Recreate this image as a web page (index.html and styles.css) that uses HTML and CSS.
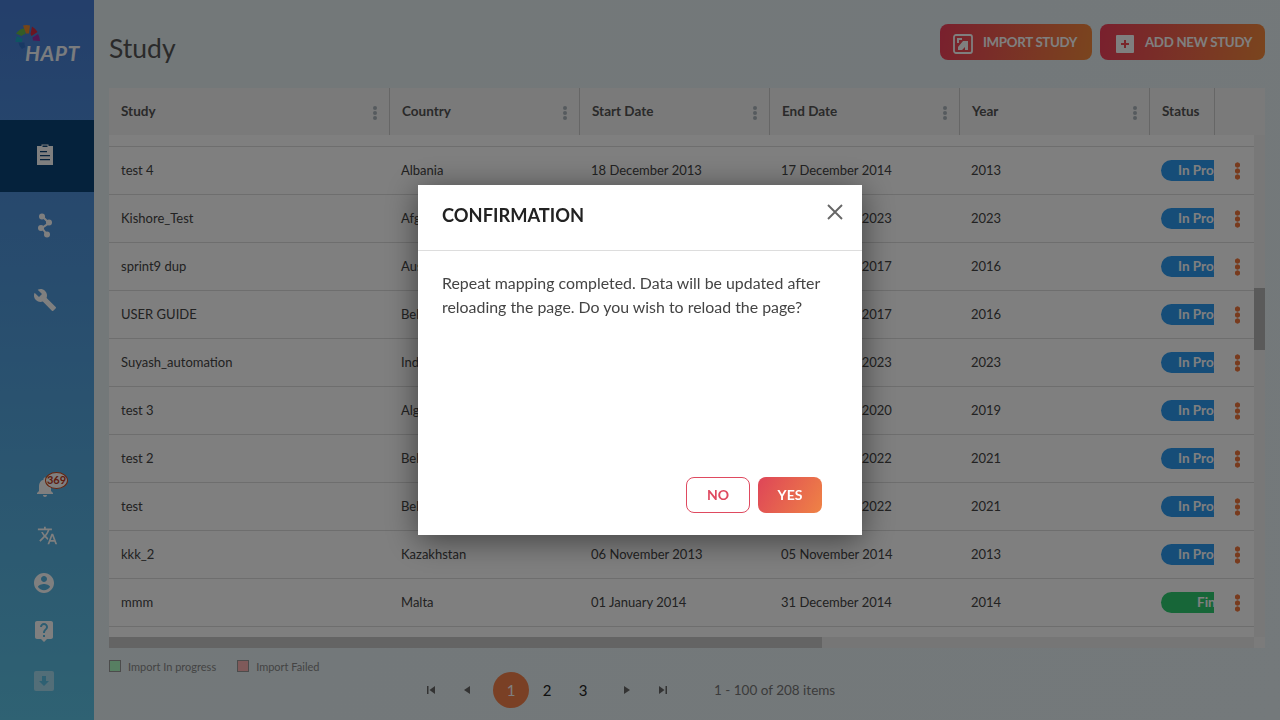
FILE: index.html
```html
<!DOCTYPE html>
<html lang="en">

<head>
    <meta charset="UTF-8">
    <meta name="viewport" content="width=device-width, initial-scale=1.0">
    <title>Study</title>
    <link rel="stylesheet" href="styles.css">
</head>

<body>
    <div class="app">
        <aside class="sidebar">
            <div class="logo">
                <svg class="logo-mark" width="40" height="32" viewBox="0 0 40 32">
                    <path d="M3.5 20A11.5 11.5 0 0 1 5 14L11 17A5 5 0 0 0 10 20Z" fill="#1fa8c4"/>
                    <path d="M4 11.5A14 14 0 0 1 13 6L13.5 12A8 8 0 0 0 9.5 14Z" fill="#68b84c"/>
                    <path d="M11 3.5A16 16 0 0 1 18 3.5L17 11.5L14 11.5Z" fill="#ec8a2c"/>
                    <path d="M20 4.5A15 15 0 0 1 25.5 10L19.5 14L18.5 12Z" fill="#d62a40"/>
                    <path d="M26 12A14 14 0 0 1 28 19L21 18.5L20.5 15.5Z" fill="#a02ca4"/>
                    <path d="M6.5 20.5L12.5 20.5A6 6 0 0 0 13.5 25L10 27A10 10 0 0 1 6.5 20.5Z" fill="#3272c8"/>
                </svg>
                <span class="logo-text">HAPT</span>
            </div>
            <nav class="nav-top">
                <a class="nav-item active" href="#">
                    <svg width="24" height="24" viewBox="0 0 24 24"><path fill-rule="evenodd" d="M4 4h4.5V2.5h7V4H20v19H4zM9.5 3.5v1.5h5V3.5zM7 9v1.2h7V9zm0 4v1.2h10V13zm0 4v1.2h10V17z"/></svg>
                </a>
                <a class="nav-item" href="#">
                    <svg width="24" height="26" viewBox="0 0 24 26"><path d="M9 3l7 7-7 5 6 8" fill="none" stroke="#fff" stroke-width="2"/><circle cx="9" cy="3.5" r="3"/><circle cx="16" cy="9.5" r="3"/><circle cx="8" cy="15" r="3"/><circle cx="14" cy="21.5" r="3"/></svg>
                </a>
                <a class="nav-item" href="#">
                    <svg width="24" height="24" viewBox="0 0 24 24"><path d="M22.7 19l-9.1-9.1c.9-2.3.4-5-1.5-6.9-2-2-5-2.4-7.4-1.3L9 6 6 9 1.6 4.7C.4 7.1.9 10.1 2.9 12.1c1.9 1.9 4.6 2.4 6.9 1.5l9.1 9.1c.4.4 1 .4 1.4 0l2.3-2.3c.5-.4.5-1.1.1-1.4z"/></svg>
                </a>
            </nav>
            <nav class="nav-bottom">
                <a class="side-link side-bell" href="#">
                    <svg width="24" height="24" viewBox="0 0 24 24"><path d="M12 22c1.1 0 2-.9 2-2h-4c0 1.1.9 2 2 2zm6-6v-5c0-3.07-1.63-5.64-4.5-6.32V4c0-.83-.67-1.5-1.5-1.5s-1.5.67-1.5 1.5v.68C7.63 5.36 6 7.92 6 11v5l-2 2v1h16v-1l-2-2z"/></svg>
                    <span class="bell-count">369</span>
                </a>
                <a class="side-link side-lang" href="#">
                    <svg width="21" height="21" viewBox="0 0 24 24"><path d="M12.87 15.07l-2.54-2.51.03-.03c1.74-1.94 2.98-4.17 3.71-6.53H17V4h-7V2H8v2H1v1.99h11.17C11.5 7.92 10.44 9.75 9 11.35 8.07 10.32 7.3 9.19 6.69 8h-2c.73 1.63 1.73 3.17 2.98 4.56l-5.09 5.02L4 19l5-5 3.11 3.11.76-2.04zM18.5 10h-2L12 22h2l1.12-3h4.75L21 22h2l-4.5-12zm-2.62 7l1.62-4.33L19.12 17h-3.24z"/></svg>
                </a>
                <a class="side-link" href="#">
                    <svg width="24" height="24" viewBox="0 0 24 24"><path d="M12 2C6.48 2 2 6.48 2 12s4.48 10 10 10 10-4.48 10-10S17.52 2 12 2zm0 3c1.66 0 3 1.34 3 3s-1.34 3-3 3-3-1.34-3-3 1.34-3 3-3zm0 14.2c-2.5 0-4.71-1.28-6-3.22.03-1.99 4-3.08 6-3.08 1.99 0 5.97 1.09 6 3.08-1.29 1.94-3.5 3.22-6 3.22z"/></svg>
                </a>
                <a class="side-link" href="#">
                    <svg width="24" height="24" viewBox="0 0 24 24"><path d="M19 2H5c-1.11 0-2 .9-2 2v14c0 1.1.89 2 2 2h4l3 3 3-3h4c1.1 0 2-.9 2-2V4c0-1.1-.9-2-2-2zm-6 16h-2v-2h2v2zm2.07-7.75l-.9.92C13.45 11.9 13 12.5 13 14h-2v-.5c0-1.1.45-2.1 1.17-2.83l1.24-1.26c.37-.36.59-.86.59-1.41 0-1.1-.9-2-2-2s-2 .9-2 2H8c0-2.21 1.79-4 4-4s4 1.79 4 4c0 .88-.36 1.68-.93 2.25z"/></svg>
                </a>
                <a class="side-link side-link-dim" href="#">
                    <svg width="20" height="20" viewBox="0 0 20 20"><path fill-rule="evenodd" d="M2 0h16a2 2 0 0 1 2 2v16a2 2 0 0 1-2 2H2a2 2 0 0 1-2-2V2a2 2 0 0 1 2-2zM8 5v5H5l5 5 5-5h-3V5z"/></svg>
                </a>
            </nav>
        </aside>

        <main class="content">
            <header class="page-head">
                <h1>Study</h1>
                <div class="head-actions">
                    <button class="grad-btn grad-btn-import">
                        <svg width="20" height="20" viewBox="0 0 20 20"><rect x="1" y="1" width="18" height="18" rx="2" fill="none" stroke="#fff" stroke-width="1.8"/><path d="M4 4h5v2H6v3H4zM5 16v-3l5-6h5v9h-3v-3l-3 3z" fill="#fff"/></svg>
                        IMPORT STUDY
                    </button>
                    <button class="grad-btn grad-btn-add">
                        <svg width="18" height="18" viewBox="0 0 18 18"><path fill-rule="evenodd" d="M1 0h16a1 1 0 0 1 1 1v16a1 1 0 0 1-1 1H1a1 1 0 0 1-1-1V1a1 1 0 0 1 1-1zM8 5v3H5v2h3v3h2v-3h3V8h-3V5z" fill="#fff"/></svg>
                        ADD NEW STUDY
                    </button>
                </div>
            </header>

            <section class="grid">
                <div class="grid-head">
                    <div class="th">Study<i class="col-menu"></i></div>
                    <div class="th">Country<i class="col-menu"></i></div>
                    <div class="th">Start Date<i class="col-menu"></i></div>
                    <div class="th">End Date<i class="col-menu"></i></div>
                    <div class="th">Year<i class="col-menu"></i></div>
                    <div class="th">Status</div>
                    <div class="th"></div>
                </div>
                <div class="grid-body">
                    <div class="rows">
                        <div class="row-stub"></div>
                        <div class="row"><div>test 4</div><div>Albania</div><div>18 December 2013</div><div>17 December 2014</div><div>2013</div><div class="clip"><span class="pill">In Progress</span></div><div class="more"><i></i></div></div>
                        <div class="row"><div>Kishore_Test</div><div>Afghanistan</div><div>01 January 2023</div><div>31 December 2023</div><div>2023</div><div class="clip"><span class="pill">In Progress</span></div><div class="more"><i></i></div></div>
                        <div class="row"><div>sprint9 dup</div><div>Australia</div><div>01 January 2016</div><div>31 December 2017</div><div>2016</div><div class="clip"><span class="pill">In Progress</span></div><div class="more"><i></i></div></div>
                        <div class="row"><div>USER GUIDE</div><div>Belgium</div><div>01 January 2016</div><div>31 December 2017</div><div>2016</div><div class="clip"><span class="pill">In Progress</span></div><div class="more"><i></i></div></div>
                        <div class="row"><div>Suyash_automation</div><div>India</div><div>01 January 2023</div><div>31 December 2023</div><div>2023</div><div class="clip"><span class="pill">In Progress</span></div><div class="more"><i></i></div></div>
                        <div class="row"><div>test 3</div><div>Algeria</div><div>01 January 2019</div><div>31 December 2020</div><div>2019</div><div class="clip"><span class="pill">In Progress</span></div><div class="more"><i></i></div></div>
                        <div class="row"><div>test 2</div><div>Belgium</div><div>01 January 2021</div><div>31 December 2022</div><div>2021</div><div class="clip"><span class="pill">In Progress</span></div><div class="more"><i></i></div></div>
                        <div class="row"><div>test</div><div>Belgium</div><div>01 January 2021</div><div>31 December 2022</div><div>2021</div><div class="clip"><span class="pill">In Progress</span></div><div class="more"><i></i></div></div>
                        <div class="row"><div>kkk_2</div><div>Kazakhstan</div><div>06 November 2013</div><div>05 November 2014</div><div>2013</div><div class="clip"><span class="pill">In Progress</span></div><div class="more"><i></i></div></div>
                        <div class="row"><div>mmm</div><div>Malta</div><div>01 January 2014</div><div>31 December 2014</div><div>2014</div><div class="clip"><span class="pill pill-done">Finished</span></div><div class="more"><i></i></div></div>
                    </div>
                    <div class="vscroll"><div class="vthumb"></div></div>
                </div>
                <div class="hscroll">
                    <div class="htrack"><div class="hthumb"></div></div>
                    <div class="corner"></div>
                </div>
            </section>

            <div class="legend">
                <span class="swatch swatch-green"></span><span>Import In progress</span>
                <span class="swatch swatch-red"></span><span>Import Failed</span>
            </div>

            <div class="pager">
                <a class="page-btn" href="#"><svg width="10" height="10" viewBox="0 0 10 10"><path d="M1 1h1.5v8H1zM9 1v8L3.5 5z"/></svg></a>
                <a class="page-btn" href="#"><svg width="10" height="10" viewBox="0 0 10 10"><path d="M8 1v8L2 5z"/></svg></a>
                <a class="page-btn current" href="#">1</a>
                <a class="page-btn" href="#">2</a>
                <a class="page-btn" href="#">3</a>
                <a class="page-btn page-next" href="#"><svg width="10" height="10" viewBox="0 0 10 10"><path d="M2 1v8l6-4z"/></svg></a>
                <a class="page-btn" href="#"><svg width="10" height="10" viewBox="0 0 10 10"><path d="M1 1v8l5.5-4zM7.5 1H9v8H7.5z"/></svg></a>
                <span class="page-info">1 - 100 of 208 items</span>
            </div>
        </main>
    </div>

    <div class="overlay">
        <div class="modal">
            <div class="modal-head">
                <h2>CONFIRMATION</h2>
                <button class="modal-close">
                    <svg width="16" height="16" viewBox="0 0 16 16"><path d="M1 1l14 14M15 1L1 15" stroke="#666" stroke-width="1.9" fill="none"/></svg>
                </button>
            </div>
            <div class="modal-body">
                <p>Repeat mapping completed. Data will be updated after reloading the page. Do you wish to reload the page?</p>
            </div>
            <div class="modal-foot">
                <button class="btn-no">NO</button>
                <button class="btn-yes">YES</button>
            </div>
        </div>
    </div>
</body>

</html>
```

FILE: styles.css
```css
html,
body {
    height: 100%;
    margin: 0;
    padding: 0;
    font-family: "Lato", "Open Sans", sans-serif;
    overflow: hidden;
}

.app {
    display: flex;
    height: 720px;
    background: linear-gradient(135deg, #e6f0f2, #e8f2f6);
}

/* sidebar */
.sidebar {
    width: 94px;
    flex: none;
    display: flex;
    flex-direction: column;
    background: linear-gradient(180deg, #487ed6, #5ec4e6);
}

.sidebar svg {
    fill: #fff;
}

.logo {
    height: 120px;
    position: relative;
    box-sizing: border-box;
}

.logo-mark {
    position: absolute;
    left: 12px;
    top: 22px;
}

.logo-text {
    position: absolute;
    left: 25px;
    top: 40px;
    color: #fff;
    font-weight: 700;
    font-style: italic;
    font-size: 21px;
    letter-spacing: 0.5px;
    opacity: 0.95;
}

.nav-item {
    height: 72px;
    display: flex;
    align-items: center;
    justify-content: center;
    padding: 0 4px 3px 0;
    box-sizing: border-box;
}

.nav-item.active {
    background-color: #0b4579;
    padding-bottom: 5px;
}

.nav-item:nth-child(2) {
    padding-bottom: 4px;
}

.nav-item:nth-child(3) {
    padding-bottom: 1px;
}

.nav-bottom {
    margin-top: auto;
    padding-bottom: 15px;
}

.side-link {
    height: 48px;
    display: flex;
    align-items: center;
    justify-content: center;
    padding-right: 6px;
    box-sizing: border-box;
    position: relative;
}

.side-bell {
    padding-right: 4px;
}

.side-lang {
    padding-right: 0;
    padding-left: 0;
}

.side-link-dim {
    margin-top: 2px;
}

.side-link-dim svg {
    fill: rgba(255, 255, 255, 0.45);
}

.bell-count {
    position: absolute;
    left: 45px;
    top: 9px;
    width: 23px;
    height: 17px;
    box-sizing: border-box;
    border: 1.5px solid #d04a1a;
    border-radius: 50%;
    background: #fff;
    color: #c0391b;
    font-size: 11px;
    font-weight: 700;
    line-height: 14px;
    text-align: center;
}

/* main */
.content {
    flex: 1;
    min-width: 0;
    padding: 0 15px;
    display: flex;
    flex-direction: column;
}

.page-head {
    height: 88px;
    flex: none;
    display: flex;
    justify-content: space-between;
    align-items: flex-start;
}

.page-head h1 {
    margin: 30px 0 0;
    font-size: 26.5px;
    line-height: 36px;
    font-weight: 400;
    color: #555;
}

.head-actions {
    display: flex;
    gap: 8px;
    margin-top: 24px;
}

.grad-btn {
    height: 36px;
    padding: 0 13px;
    border: none;
    border-radius: 8px;
    background: linear-gradient(100deg, #f2405c, #f58a3c);
    color: #fff;
    font-family: inherit;
    font-size: 13.3px;
    font-weight: 700;
    letter-spacing: -0.3px;
    display: flex;
    align-items: center;
    gap: 10px;
}

.grad-btn svg {
    margin-top: 4px;
}

.grad-btn-import {
    padding-right: 14px;
    min-width: 152px;
}

.grad-btn-add {
    padding-left: 16px;
    gap: 11px;
}

/* grid */
.grid-head,
.row {
    display: grid;
    grid-template-columns: 281px 190px 190px 190px 190px 65px 39px;
}

.grid-head {
    height: 47px;
    background: #f4f4f4;
    padding-right: 11px;
}

.th {
    position: relative;
    padding: 0 12px 2px;
    display: flex;
    align-items: center;
    font-size: 13.5px;
    font-weight: 700;
    color: #555;
    border-right: 1px solid #ccc;
}

.th:last-child {
    border-right: none;
}

.col-menu {
    position: absolute;
    right: 12px;
    top: 18px;
    width: 4px;
    height: 4px;
    border-radius: 50%;
    background: #aab4bc;
    box-shadow: 0 5px 0 #aab4bc, 0 10px 0 #aab4bc;
}

.grid-body {
    height: 502px;
    display: flex;
    overflow: hidden;
    background: #fff;
}

.rows {
    width: 1145px;
}

.row-stub {
    height: 11px;
    border-bottom: 1px solid #ddd;
}

.row {
    height: 47px;
    border-bottom: 1px solid #ddd;
    align-items: center;
    font-size: 13px;
    color: #444;
}

.row > div {
    padding: 0 11px 1px;
}

.row > div:first-child {
    padding-left: 12px;
}

.row > .clip {
    height: 100%;
    padding: 0;
    margin-right: 1px;
    display: flex;
    align-items: center;
    overflow: hidden;
}

.pill {
    flex: none;
    box-sizing: border-box;
    margin-left: 11px;
    width: 110px;
    height: 21px;
    padding-left: 17px;
    border-radius: 11px 0 0 11px;
    background: #2d9bf0;
    color: #fff;
    font-size: 13.5px;
    font-weight: 700;
    line-height: 21px;
}

.pill-done {
    padding-left: 36px;
    background: #2ecc71;
}

.row > .more {
    padding: 0;
    display: flex;
    justify-content: center;
}

.more i {
    width: 5px;
    height: 18px;
    margin-left: 5px;
    background: radial-gradient(circle, #f0763c 2.3px, transparent 2.9px) 0 0 / 5px 6px;
}

.vscroll {
    width: 11px;
    background: #f1f1f1;
}

.vthumb {
    height: 62px;
    margin-top: 153px;
    background: #b5b5b5;
}

.hscroll {
    height: 11px;
    display: flex;
}

.htrack {
    flex: 1;
    background: #ececec;
}

.hthumb {
    width: 713px;
    height: 100%;
    background: #c9c9c9;
}

.corner {
    width: 11px;
    background: #f6f6f6;
}

/* footer */
.legend {
    display: flex;
    align-items: center;
    margin-top: 12px;
    height: 12px;
    font-size: 11px;
    color: #888;
}

.swatch {
    width: 10px;
    height: 10px;
    border: 1px solid #999;
    margin-right: 7px;
}

.swatch-green {
    background: #aeffc4;
}

.swatch-red {
    background: #ffb4b4;
    margin-left: 21px;
}

.pager {
    display: flex;
    align-items: center;
    padding-left: 304px;
}

.page-btn {
    width: 36px;
    height: 36px;
    display: flex;
    align-items: center;
    justify-content: center;
    border-radius: 50%;
    color: #222;
    font-size: 15px;
    text-decoration: none;
}

.page-btn svg {
    fill: #666;
}

.page-btn.current {
    margin-left: 8px;
    background: #f4804a;
    color: #fff;
}

.page-next {
    margin-left: 8px;
}

.page-info {
    margin-left: 33px;
    font-size: 13.5px;
    color: #777;
}

/* modal */
.overlay {
    position: fixed;
    inset: 0;
    background: rgba(0, 0, 0, 0.5);
    display: flex;
    align-items: center;
    justify-content: center;
}

.modal {
    width: 444px;
    height: 350px;
    background: #fff;
    display: flex;
    flex-direction: column;
    box-shadow: 0 5px 30px rgba(0, 0, 0, 0.5);
}

.modal-head {
    height: 66px;
    box-sizing: border-box;
    border-bottom: 1px solid #ddd;
    padding: 0 19px 0 24px;
    display: flex;
    justify-content: space-between;
}

.modal-head h2 {
    margin: 18px 0 0;
    font-size: 18.3px;
    line-height: 24px;
    font-weight: 700;
    color: #222;
}

.modal-close {
    border: none;
    background: none;
    padding: 0;
    height: 16px;
    margin-top: 19px;
}

.modal-body {
    flex: 1;
    padding: 20px 24px 0;
}

.modal-body p {
    margin: 0;
    font-size: 15.9px;
    line-height: 24px;
    color: #444;
}

.modal-foot {
    display: flex;
    justify-content: flex-end;
    gap: 8px;
    padding: 0 40px 22px;
}

.btn-no,
.btn-yes {
    width: 64px;
    height: 36px;
    padding: 0 0 2px;
    border-radius: 8px;
    font-family: inherit;
    font-size: 14px;
    font-weight: 700;
}

.btn-no {
    background: #fff;
    border: 1px solid #df4a60;
    color: #df4a60;
}

.btn-yes {
    border: none;
    color: #fff;
    background: linear-gradient(120deg, #de4558, #ef8345);
}
```
